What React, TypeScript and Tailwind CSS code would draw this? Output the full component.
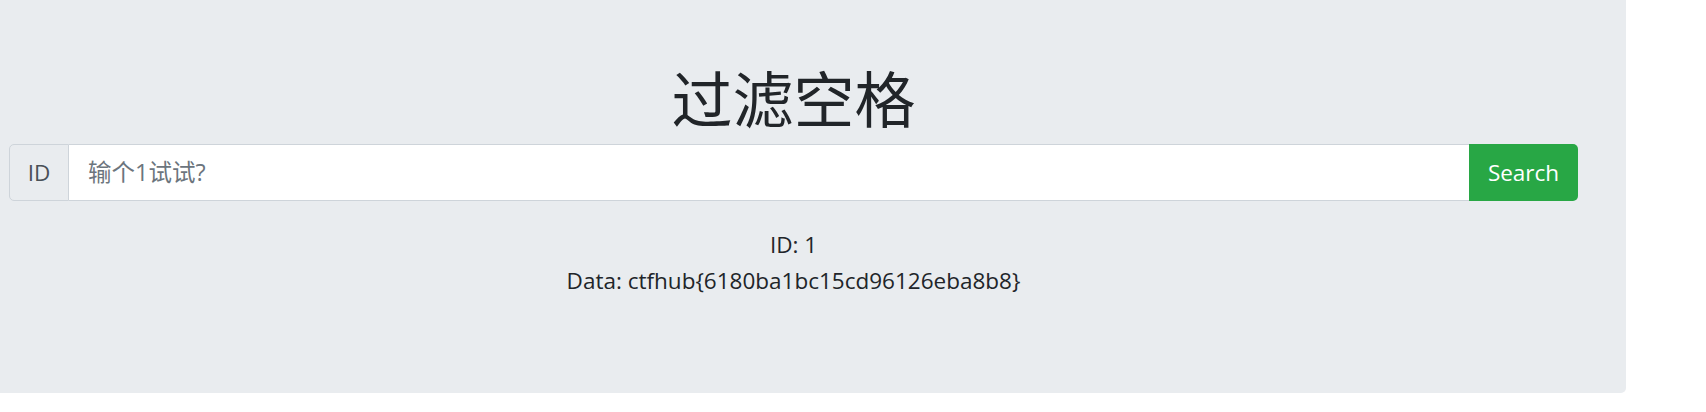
export default function App() {
  const font = "font-['Open_Sans','Noto_Sans_CJK_SC',sans-serif]";
  return (
    <div className={`w-[1626px] h-[393px] bg-[#e9ecef] rounded-br-[5px] pl-[9px] pt-[61px] text-[#212529] ${font}`}>
      <div className="w-[1569px] text-center">
        <h1 className="text-[61px] leading-[71px] font-normal font-['Noto_Sans_CJK_SC',sans-serif] text-[#212529]">
          过滤空格
        </h1>
        <div className="mt-[12px] flex h-[57px] text-left">
          <span className="flex w-[60px] items-center justify-center rounded-l-[5px] border border-[#ced4da] bg-[#e9ecef] text-[22.5px] text-[#495057]">
            ID
          </span>
          <input
            className="min-w-0 flex-1 border-y border-[#ced4da] bg-white pl-[19px] text-[23.5px] text-[#495057] outline-none placeholder:text-[#6c757d]"
            placeholder="输个1试试?"
          />
          <button className="w-[109px] rounded-r-[5px] bg-[#28a745] text-[22.5px] text-white">
            Search
          </button>
        </div>
        <div className="mt-[26px] text-[22.5px] leading-[35.5px]">
          ID: 1
          <br />
          Data: ctfhub{"{"}6180ba1bc15cd96126eba8b8{"}"}
        </div>
      </div>
    </div>
  );
}
